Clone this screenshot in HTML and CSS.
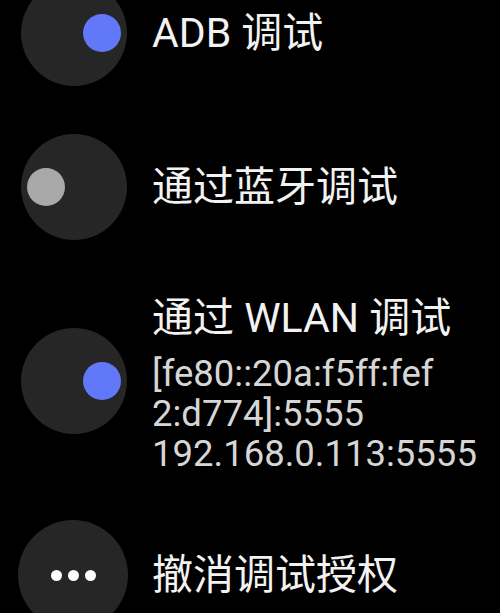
FILE: index.html
```html
<!DOCTYPE html>
<html lang="zh-CN">
<head>
  <meta charset="UTF-8" />
  <meta name="viewport" content="width=device-width, initial-scale=1.0" />
  <title>开发者选项</title>
  <link rel="stylesheet" href="styles.css">
</head>
<body>

<ul class="options">
  <li class="option">
    <span class="toggle on"><span class="knob"></span></span>
    <div class="text">
      <div class="title">ADB 调试</div>
    </div>
  </li>

  <li class="option">
    <span class="toggle"><span class="knob"></span></span>
    <div class="text">
      <div class="title">通过蓝牙调试</div>
    </div>
  </li>

  <li class="option tall">
    <span class="toggle on"><span class="knob"></span></span>
    <div class="text">
      <div class="title">通过 WLAN 调试</div>
      <div class="summary">
        <span>[fe80::20a:f5ff:fef</span>
        <span>2:d774]:5555</span>
        <span>192.168.0.113:5555</span>
      </div>
    </div>
  </li>

  <li class="option">
    <span class="more-btn">
      <span class="dot"></span><span class="dot"></span><span class="dot"></span>
    </span>
    <div class="text">
      <div class="title">撤消调试授权</div>
    </div>
  </li>
</ul>

</body>
</html>
```

FILE: styles.css
```css
body {
  margin: 0;
  background: #000;
  font-family: Roboto, "Noto Sans CJK SC", sans-serif;
  color: #f2f2f2;
  overflow: hidden;
}
.options {
  list-style: none;
  margin: -44px 0 0;
  padding: 0;
}
.option {
  display: flex;
  align-items: center;
  gap: 25px;
  min-height: 154px;
  padding: 0 0 0 21px;
  box-sizing: border-box;
}
.option.tall {
  padding-top: 30px;
  padding-bottom: 24px;
}
.toggle {
  flex: none;
  width: 106px;
  height: 106px;
  border-radius: 50%;
  background: #262626;
  display: flex;
  align-items: center;
  justify-content: flex-start;
  padding: 6px;
  box-sizing: border-box;
}
.option.tall .toggle {
  margin-top: -6px;
}
.toggle.on {
  justify-content: flex-end;
}
.knob {
  width: 38px;
  height: 38px;
  border-radius: 50%;
  background: #a9a9a9;
}
.toggle.on .knob {
  background: #6179f8;
}
.more-btn {
  flex: none;
  width: 110px;
  height: 110px;
  margin-left: -3px;
  margin-right: -1px;
  border-radius: 50%;
  background: #262626;
  display: flex;
  align-items: center;
  justify-content: center;
  gap: 6px;
}
.dot {
  width: 11px;
  height: 11px;
  border-radius: 50%;
  background: #fff;
}
.title {
  font-size: 41px;
  line-height: 48px;
  white-space: nowrap;
}
.summary {
  margin-top: 12px;
  font-size: 36.5px;
  line-height: 40px;
  color: #d6d6d6;
}
.summary span {
  display: block;
  white-space: nowrap;
}
```
